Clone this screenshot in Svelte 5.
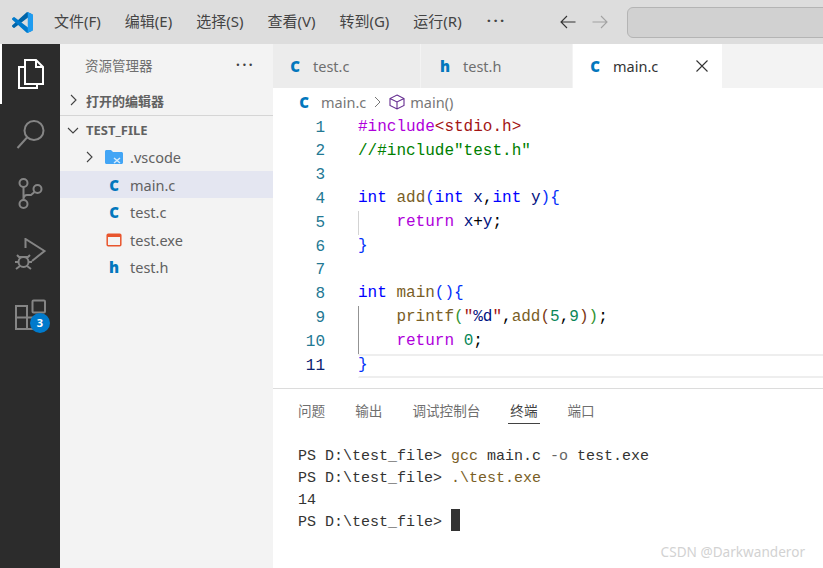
<script>
  const menus = ['文件(F)', '编辑(E)', '选择(S)', '查看(V)', '转到(G)', '运行(R)']
  const files = [
    { name: 'main.c', kind: 'C', active: true },
    { name: 'test.c', kind: 'C' },
    { name: 'test.exe', kind: 'exe' },
    { name: 'test.h', kind: 'h' }
  ]
  const tabs = [
    { name: 'test.c', kind: 'C' },
    { name: 'test.h', kind: 'h' },
    { name: 'main.c', kind: 'C', active: true }
  ]
  const panelTabs = ['问题', '输出', '调试控制台', '终端', '端口']

  // [text, class] tokens for each line of the editor
  const code = [
    { t: [['#include', 'kw'], ['<stdio.h>', 'str']] },
    { t: [['//#include"test.h"', 'com']] },
    { t: [] },
    { t: [['int', 'ty'], [' '], ['add', 'fn'], ['(', 'b1'], ['int', 'ty'], [' '], ['x', 'var'], [','], ['int', 'ty'], [' '], ['y', 'var'], [')', 'b1'], ['{', 'b1']] },
    { t: [['    '], ['return', 'kw'], [' '], ['x', 'var'], ['+'], ['y', 'var'], [';']], guide: 'light' },
    { t: [['}', 'b1']] },
    { t: [] },
    { t: [['int', 'ty'], [' '], ['main', 'fn'], ['()', 'b1'], ['{', 'b1']] },
    { t: [['    '], ['printf', 'fn'], ['(', 'b2'], ['"', 'str'], ['%d', 'var'], ['"', 'str'], [','], ['add', 'fn'], ['(', 'b3'], ['5', 'num'], [','], ['9', 'num'], [')', 'b3'], [')', 'b2'], [';']], guide: 'dark' },
    { t: [['    '], ['return', 'kw'], [' '], ['0', 'num'], [';']], guide: 'dark' },
    { t: [['}', 'b1']], current: true }
  ]
</script>

{#snippet fileIcon(kind)}
  {#if kind === 'exe'}
    <svg class="ficon" width="16" height="16" viewBox="0 0 16 16"><rect x="1.200" y="2.200" width="13.600" height="11.600" rx="1" fill="none" stroke="#e8552d" stroke-width="1.500" /><rect x="1.200" y="2.200" width="13.600" height="2.800" fill="#e8552d" /></svg>
  {:else}
    <span class="ficon letter">{kind}</span>
  {/if}
{/snippet}

<div class="window">
  <header class="titlebar">
    <svg class="logo" width="21" height="21" viewBox="0 0 100 100">
      <path fill="#0065a9" d="M96.500 10.800 75.900.9a6.200 6.200 0 0 0-7.100 1.200L1.400 63.600a4.200 4.200 0 0 0 0 6.100l5.500 5a4.200 4.200 0 0 0 5.300.2L93.400 13.400c2.700-2.100 6.600-.2 6.600 3.200v-.2a6.200 6.200 0 0 0-3.500-5.600Z" />
      <path fill="#007acc" d="m96.500 89.200-20.600 9.900a6.200 6.200 0 0 1-7.100-1.200L1.400 36.400a4.200 4.200 0 0 1 0-6.100l5.500-5a4.200 4.200 0 0 1 5.300-.2l81.200 61.500c2.700 2.100 6.600.2 6.600-3.200v.2a6.200 6.200 0 0 1-3.500 5.600Z" />
      <path fill="#1f9cf0" d="M75.900 99.100a6.200 6.200 0 0 1-7.100-1.200c2.300 2.300 6.200.7 6.200-2.600V4.700c0-3.300-3.900-4.900-6.200-2.600a6.200 6.200 0 0 1 7.100-1.200l20.600 9.900a6.200 6.200 0 0 1 3.500 5.600v67.200a6.200 6.200 0 0 1-3.500 5.600Z" />
    </svg>
    <nav class="menus">
      {#each menus as m}<span>{m}</span>{/each}
      <span class="more">···</span>
    </nav>
    <svg class="arrow" width="18" height="16" viewBox="0 0 18 16"><path d="M16.500 8H2M8 2 2 8l6 6" fill="none" stroke="#333" stroke-width="1.100" /></svg>
    <svg class="arrow" width="18" height="16" viewBox="0 0 18 16"><path d="M1.500 8H16M10 2l6 6-6 6" fill="none" stroke="#a2a2a2" stroke-width="1.100" /></svg>
    <div class="search"></div>
  </header>

  <div class="body">
    <aside class="activity">
      <div class="act active">
        <svg width="30" height="32" viewBox="0 0 30 32" fill="none" stroke="#fff" stroke-width="2"><path d="M9 2h11l7 7v17H9Z" fill="#2c2c2c" /><path d="M20 2v7h7" /><path d="M9 9H3v21h18v-4" /></svg>
      </div>
      <div class="act">
        <svg width="30" height="32" viewBox="0 0 30 32" fill="none" stroke="#858585" stroke-width="2"><circle cx="18" cy="12.500" r="9.500" /><path d="M11 19.500 1.500 30" /></svg>
      </div>
      <div class="act">
        <svg width="26" height="32" viewBox="0 0 26 32" fill="none" stroke="#858585" stroke-width="2"><circle cx="5.500" cy="5" r="4" /><circle cx="5.500" cy="26" r="4" /><circle cx="19.500" cy="11" r="4" /><path d="M5.500 9v13M16.500 14 13 17H9q-3 0-3.500 4" /></svg>
      </div>
      <div class="act">
        <svg width="32" height="32" viewBox="0 0 32 32" fill="none" stroke="#858585" stroke-width="2"><path d="M10.500 10V1l19 12-12.500 10" /><circle cx="8.500" cy="24" r="5" /><path d="M4 19h9M2 17l3 3M15 17l-3 3M0 24h4M13 24h4M1 31l4-3M16 31l-4-3" /></svg>
      </div>
      <div class="act ext">
        <svg width="31" height="31" viewBox="0 0 31 31" fill="none" stroke="#858585" stroke-width="2"><rect x="17.500" y="1.500" width="12.500" height="12" rx="1" /><path d="M1 7h11v23H1ZM1 18.500h21M12 18.500V30h10V18.500" /></svg>
        <span class="badge">3</span>
      </div>
    </aside>

    <section class="sidebar">
      <div class="side-head"><span>资源管理器</span><b>···</b></div>
      <div class="sec open">
        <svg width="16" height="16" viewBox="0 0 16 16"><path d="m6 3 5 5-5 5" fill="none" stroke="#424242" stroke-width="1.100" /></svg>
        打开的编辑器
      </div>
      <div class="sec root">
        <svg width="16" height="16" viewBox="0 0 16 16"><path d="m3 6 5 5 5-5" fill="none" stroke="#424242" stroke-width="1.100" /></svg>
        TEST_FILE
      </div>
      <div class="row folder">
        <svg width="16" height="16" viewBox="0 0 16 16"><path d="m6 3 5 5-5 5" fill="none" stroke="#424242" stroke-width="1.100" /></svg>
        <svg class="ficon" width="18" height="16" viewBox="0 0 18 16"><path d="M0 2.500C0 1.700.7 1 1.500 1H6l2 2h8.500c.8 0 1.500.7 1.500 1.500v9c0 .8-.7 1.500-1.500 1.500h-15C.7 15 0 14.300 0 13.500Z" fill="#42a5f5" /><path d="m9 9 6 5M15 9l-6 5" stroke="#d6ebfc" stroke-width="1.500" /></svg>
        <span>.vscode</span>
      </div>
      {#each files as f}
        <div class="row file" class:active={f.active}>
          {@render fileIcon(f.kind)}
          <span>{f.name}</span>
        </div>
      {/each}
    </section>

    <main class="editor">
      <div class="tabs">
        {#each tabs as t}
          <div class="tab" class:active={t.active}>
            {@render fileIcon(t.kind)}
            <span>{t.name}</span>
            {#if t.active}
              <svg class="close" width="16" height="16" viewBox="0 0 16 16"><path d="m2.500 2.500 11 11M13.500 2.500l-11 11" stroke="#333" stroke-width="1.100" /></svg>
            {/if}
          </div>
        {/each}
      </div>

      <div class="crumbs">
        {@render fileIcon('C')}
        <span>main.c</span>
        <svg class="sep" width="14" height="16" viewBox="0 0 14 16"><path d="m4 3 5 5-5 5" fill="none" stroke="#777" stroke-width="1" /></svg>
        <svg class="cube" width="16" height="16" viewBox="0 0 16 16" fill="none" stroke="#652d90" stroke-width="1.100"><path d="M8 1 15 4.500v7L8 15l-7-3.500v-7ZM1 4.500 8 8l7-3.500M8 8v7" /></svg>
        <span>main()</span>
      </div>

      <div class="code">
        {#each code as line, i}
          <div class="line" class:current={line.current}>
            <span class="num-col">{i + 1}</span>
            <pre class:guide-light={line.guide === 'light'} class:guide-dark={line.guide === 'dark'}>{#each line.t as tok}<span class={tok[1]}>{tok[0]}</span>{/each}</pre>
          </div>
        {/each}
      </div>

      <div class="panel">
        <div class="panel-tabs">
          {#each panelTabs as p}
            <span class:active={p === '终端'}>{p}</span>
          {/each}
        </div>
        <div class="term">
          <pre>PS D:\test_file&gt; <span class="cmd">gcc</span> main.c <span class="opt">-o</span> test.exe</pre>
          <pre>PS D:\test_file&gt; <span class="cmd">.\test.exe</span></pre>
          <pre>14</pre>
          <pre>PS D:\test_file&gt; <i class="cursor"></i></pre>
        </div>
        <div class="mark">CSDN @Darkwanderor</div>
      </div>
    </main>
  </div>
</div>

<style>
  :global(body) {
    margin: 0;
    overflow: hidden;
    background: #fff;
  }
  .window {
    width: 823px;
    height: 568px;
    display: flex;
    flex-direction: column;
    overflow: hidden;
    font-family: "Noto Sans", "Noto Sans CJK SC", sans-serif;
    font-size: 14.500px;
    color: #616161;
  }
  .titlebar {
    height: 44px;
    flex: none;
    display: flex;
    align-items: center;
    background: #dddddd;
    color: #444;
  }
  .titlebar > * {
    flex: none;
  }
  .logo {
    margin-left: 12px;
  }
  .menus {
    display: flex;
    gap: 24px;
    margin-left: 21px;
    width: 505px;
    font-size: 15px;
    white-space: nowrap;
    padding-bottom: 4px;
  }
  .more {
    letter-spacing: 2.500px;
    font-weight: 700;
    margin-left: 1px;
  }
  .arrow {
    margin-right: 14px;
  }
  .search {
    width: 300px;
    height: 29px;
    margin-left: 4px;
    border: 1px solid #b4b4b4;
    border-radius: 6px;
    background: #d1d1d1;
  }
  .body {
    flex: 1;
    display: flex;
    min-height: 0;
  }
  .activity {
    width: 60px;
    flex: none;
    background: #2c2c2c;
  }
  .act {
    height: 60px;
    display: flex;
    align-items: center;
    justify-content: center;
    position: relative;
    box-sizing: border-box;
    padding-left: 1px;
  }
  .act.active {
    border-left: 2px solid #fff;
    padding-left: 0;
  }
  .badge {
    position: absolute;
    left: 30px;
    top: 29px;
    width: 20px;
    height: 20px;
    border-radius: 50%;
    background: #007acc;
    color: #fff;
    font-size: 11px;
    font-weight: 700;
    text-align: center;
    line-height: 20px;
  }
  .sidebar {
    width: 213px;
    flex: none;
    background: #f3f3f3;
  }
  .side-head {
    height: 43px;
    display: flex;
    align-items: center;
    justify-content: space-between;
    padding: 0 18px 2px 25px;
    box-sizing: border-box;
    font-size: 13.500px;
    color: #6f6f6f;
  }
  .side-head b {
    color: #424242;
    letter-spacing: 2.500px;
  }
  .sec {
    height: 28px;
    display: flex;
    align-items: center;
    gap: 5px;
    padding-left: 5px;
    font-size: 13px;
    font-weight: 700;
    color: #616161;
    box-sizing: border-box;
  }
  .sec.open {
    border-bottom: 1px solid #d5d5d5;
    height: 29px;
    padding-bottom: 2px;
  }
  .sec.root {
    height: 27.400px;
  }
  .row {
    height: 27.500px;
    display: flex;
    align-items: center;
    font-size: 14.500px;
  }
  .row.folder {
    padding-left: 21px;
    gap: 8px;
  }
  .row.folder .ficon {
    margin-right: -1px;
  }
  .row.file {
    padding-left: 46px;
  }
  .row.file .ficon {
    width: 16px;
    margin-right: 8px;
  }
  .row.active {
    background: #e4e6f1;
  }
  .ficon {
    flex: none;
  }
  .letter {
    font-family: "Open Sans", sans-serif;
    font-weight: 800;
    font-size: 15px;
    color: #0277bd;
    display: inline-block;
    width: 14px;
    text-align: center;
  }
  .editor {
    flex: 1;
    min-width: 0;
    display: flex;
    flex-direction: column;
  }
  .tabs {
    height: 44px;
    flex: none;
    display: flex;
    background: #f3f3f3;
  }
  .tab {
    width: 148px;
    display: flex;
    align-items: center;
    padding-left: 15px;
    box-sizing: border-box;
    background: #ececec;
    border-right: 1px solid #f3f3f3;
    gap: 11px;
    color: #6f6f6f;
  }
  .tab:nth-child(2) {
    width: 152px;
    padding-left: 17px;
  }
  .tab.active {
    width: 149px;
    background: #fff;
    color: #333;
    border: 0;
  }
  .close {
    margin-left: 25px;
  }
  .crumbs {
    height: 27.800px;
    flex: none;
    display: flex;
    align-items: center;
    gap: 4px;
    padding-left: 24px;
    color: #777;
  }
  .crumbs .ficon {
    margin-right: 6px;
  }
  .crumbs .sep {
    margin-left: 1px;
    margin-right: 0;
  }
  .crumbs .cube {
    margin-right: 1px;
  }
  .code {
    flex: none;
    height: 273.200px;
    font-family: "Liberation Mono", monospace;
    font-size: 16px;
    border-bottom: 1px solid #dcdcdc;
    box-sizing: border-box;
  }
  .line {
    height: 23.800px;
    display: flex;
    align-items: center;
    box-sizing: border-box;
  }
  .num-col {
    width: 52px;
    text-align: right;
    color: #237893;
    flex: none;
  }
  pre {
    margin: 0;
    font: inherit;
  }
  .line pre {
    margin-left: 33px;
    flex: 1;
    height: 100%;
    line-height: 23.800px;
    box-sizing: border-box;
    color: #000;
    border-left: 1px solid transparent;
    text-indent: -1px;
  }
  .guide-light {
    border-left-color: #d3d3d3 !important;
  }
  .guide-dark {
    border-left-color: #939393 !important;
  }
  .line.current .num-col {
    color: #0b216f;
  }
  .line.current pre {
    border-top: 2px solid #eeeeee;
    border-bottom: 2px solid #eeeeee;
    line-height: 19.800px;
  }
  .kw { color: #af00db; }
  .str { color: #a31515; }
  .com { color: #008000; }
  .ty { color: #0000ff; }
  .fn { color: #795e26; }
  .var { color: #001080; }
  .num { color: #098658; }
  .b1 { color: #0431fa; }
  .b2 { color: #319331; }
  .b3 { color: #7b3814; }
  .panel {
    flex: 1;
    position: relative;
    padding-left: 25px;
  }
  .panel-tabs {
    display: flex;
    gap: 30px;
    height: 43px;
    align-items: center;
    font-size: 13.600px;
    color: #6f6f6f;
  }
  .panel-tabs span {
    position: relative;
    padding: 4px 0;
  }
  .panel-tabs .active {
    color: #424242;
  }
  .panel-tabs .active::after {
    content: "";
    position: absolute;
    left: -2px;
    right: -2px;
    bottom: 0;
    height: 1px;
    background: #424242;
  }
  .term {
    font-family: "Liberation Mono", monospace;
    font-size: 15px;
    color: #333;
    margin-top: 14px;
  }
  .term pre {
    height: 22px;
    line-height: 22px;
  }
  .cmd { color: #795e26; }
  .opt { color: #666; }
  .cursor {
    display: inline-block;
    position: relative;
    top: -3px;
    width: 9px;
    height: 22px;
    background: #333;
    vertical-align: top;
  }
  .mark {
    position: absolute;
    right: 18px;
    bottom: 7px;
    font-size: 13.600px;
    color: #d2d2d2;
  }
</style>
